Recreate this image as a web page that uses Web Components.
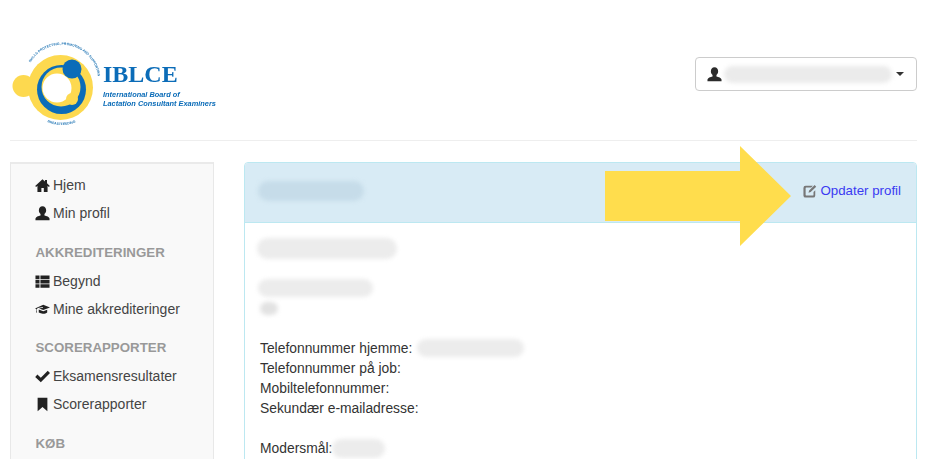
<!DOCTYPE html>
<html lang="da">
<head>
<meta charset="utf-8">
<title>IBLCE</title>
<style>
  html, body { margin: 0; height: 100%; overflow: hidden; background: #fff; }
  body { font: 14px/20px "Liberation Sans", Arial, sans-serif; color: #333; }
</style>
</head>
<body>
<app-page>
  <iblce-logo slot="logo"></iblce-logo>
  <user-menu slot="user"></user-menu>

  <side-nav slot="nav">
    <nav-item icon="home">Hjem</nav-item>
    <nav-item icon="user">Min profil</nav-item>
    <nav-heading>Akkrediteringer</nav-heading>
    <nav-item icon="list">Begynd</nav-item>
    <nav-item icon="cap">Mine akkrediteringer</nav-item>
    <nav-heading style="margin-top:15px">Scorerapporter</nav-heading>
    <nav-item icon="check">Eksamensresultater</nav-item>
    <nav-item icon="bookmark">Scorerapporter</nav-item>
    <nav-heading>Køb</nav-heading>
  </side-nav>

  <profile-panel slot="main">
    <blur-mark slot="title" w="106" h="20" tone="#c6dce9"></blur-mark>
    <profile-line><blur-mark w="140" h="21" style="margin-left:-3px"></blur-mark></profile-line>
    <profile-line></profile-line>
    <profile-line><blur-mark w="115" h="18" style="margin-left:-2px"></blur-mark></profile-line>
    <profile-line><blur-mark w="18" h="13" tone="#e2e2e2"></blur-mark></profile-line>
    <profile-line></profile-line>
    <profile-line>Telefonnummer hjemme:<blur-mark w="107" h="18" style="margin-left:5px"></blur-mark></profile-line>
    <profile-line>Telefonnummer på job:</profile-line>
    <profile-line>Mobiltelefonnummer:</profile-line>
    <profile-line>Sekundær e-mailadresse:</profile-line>
    <profile-line></profile-line>
    <profile-line>Modersmål:<blur-mark w="53" h="19"></blur-mark></profile-line>
  </profile-panel>

  <callout-arrow slot="overlay"></callout-arrow>
</app-page>

<script>
const ICONS = {
  home: '<path d="M8 1.2 .2 8.400l1 1.100L2.600 8.300V15h4.200v-4.400h2.600V15h4V8.300l1.400 1.200 1-1.100L12.800 5.600V2h-2.200v1.600z"/>',
  user: '<path d="M8 .3c-2.500 0-3.900 1.900-3.900 4.300 0 1.700.8 3.200 1.800 4v1.500c-2.300.6-5.100 1.500-5.400 3.100v2.100h15v-2.100c-.3-1.600-3.100-2.500-5.400-3.100V8.600c1-.8 1.800-2.300 1.800-4C11.900 2.200 10.500.3 8 .3z"/>',
  list: '<path d="M.5 1.500h4.300v3.800H.5zM5.800 1.500h9.700v3.800H5.800zM.5 6.200h4.300V10H.5zM5.800 6.200h9.700V10H5.800zM.5 10.900h4.300v3.800H.5zM5.800 10.900h9.700v3.800H5.800z"/>',
  cap: '<path d="M8.800 3 16 5.800 8.800 8.600 4.300 6.900 8.600 6.100 8.400 5.400 3 6.500 1.900 7.700 1.800 9.600 2.300 11.300 1.200 11.300 1.300 9.500 1.400 7.400 0 6.800zM4 8l4.800 1.900L13 8.200v3c-1.100 1-2.800 1.500-4.700 1.400-1.500-.1-3-.5-4.300-1.300z"/>',
  check: '<path d="M13.600 1.800 16 4.300 6.200 14.200 .2 8.400 2.600 5.900l3.600 3.400z"/>',
  bookmark: '<path d="M2.800 .8h10.400v14.400L8 10.600 2.800 15.200z"/>',
  edit: '<path d="M3 2h8.300L9.300 4H3.500a.5.500 0 0 0-.5.500v8a.5.500 0 0 0 .5.500h8a.5.500 0 0 0 .5-.5V9l2-2v6a2.500 2.500 0 0 1-2.500 2.500H3A2.500 2.500 0 0 1 .5 13V4.500A2.500 2.500 0 0 1 3 2zM13.300 1.200l1.800 1.800-6.300 6.200-2.500.7.700-2.500z"/>'
};

function iconSvg(name, size) {
  return `<svg viewBox="0 0 16 16" width="${size}" height="${size}" fill="currentColor" aria-hidden="true">${ICONS[name]}</svg>`;
}

class AppPage extends HTMLElement {
  connectedCallback() {
    this.attachShadow({ mode: 'open' });
    this.shadowRoot.innerHTML = `
      <style>
        :host { display: block; position: relative; height: 100vh; overflow: hidden; padding: 0 14px 0 10px; box-sizing: border-box; }
        header { display: flex; justify-content: space-between; align-items: flex-start; height: 140px; border-bottom: 1px solid #eee; }
        .logo-slot { padding-top: 43px; margin-left: 2px; }
        .user-slot { padding-top: 57px; }
        .columns { display: grid; grid-template-columns: 204px 1fr; column-gap: 30px; margin-top: 21px; }
        .overlay { position: absolute; left: 605px; top: 146px; }
      </style>
      <header>
        <div class="logo-slot"><slot name="logo"></slot></div>
        <div class="user-slot"><slot name="user"></slot></div>
      </header>
      <div class="columns">
        <slot name="nav"></slot>
        <slot name="main"></slot>
      </div>
      <div class="overlay"><slot name="overlay"></slot></div>
    `;
  }
}
customElements.define('app-page', AppPage);

class IblceLogo extends HTMLElement {
  connectedCallback() {
    this.attachShadow({ mode: 'open' });
    const gap = '&#160;'.repeat(16);
    this.shadowRoot.innerHTML = `
      <style>
        :host { display: block; width: 205px; height: 84px; }
        svg { display: block; overflow: visible; filter: blur(.35px); }
        .big { font: bold 24px "Liberation Serif", serif; fill: #0b6cb8; }
        .tag { font: italic bold 7.4px "Liberation Sans", sans-serif; fill: #0b6cb8; }
        .ring { font: bold 3.4px "Liberation Sans", sans-serif; fill: #1f74b4; }
      </style>
      <svg viewBox="0 0 205 84" width="205" height="84">
        <defs>
          <path id="ring" d="M18.500 19.500A36.500 36.500 0 0 1 85.500 46M33 78A37 37 0 0 0 70 76"/>
        </defs>
        <g transform="translate(-12,-43)">
          <circle cx="60.500" cy="87.500" r="32.500" fill="#fdd94f"/>
          <circle cx="23.500" cy="86" r="11" fill="#fdd94f"/>
          <circle cx="61.500" cy="89.500" r="24.500" fill="#0b6cb8"/>
          <circle cx="61" cy="87" r="19.500" fill="#fdd94f"/>
          <circle cx="57" cy="88" r="14.500" fill="#fff"/>
          <circle cx="72" cy="69" r="9.500" fill="#0b6cb8"/>
          <circle cx="72" cy="99" r="6" fill="#fdd94f"/>
        </g>
        <text class="ring"><textPath href="#ring">SKILLS PROTECTING, PROMOTING AND SUPPORTING${gap}BREASTFEEDING</textPath></text>
        <text class="big" x="91" y="39">IBLCE</text>
        <text class="tag" x="91" y="54">International Board of</text>
        <text class="tag" x="91" y="63">Lactation Consultant Examiners</text>
      </svg>
    `;
  }
}
customElements.define('iblce-logo', IblceLogo);

class UserMenu extends HTMLElement {
  connectedCallback() {
    this.attachShadow({ mode: 'open' });
    this.shadowRoot.innerHTML = `
      <style>
        :host { display: flex; align-items: center; box-sizing: border-box; width: 222px; height: 34px; padding: 0 11px; border: 1px solid #ccc; border-radius: 4px; background: #fff; color: #2b2b2b; }
        svg { flex: none; margin-right: 2px; }
        .caret { width: 0; height: 0; margin-left: 4px; border-top: 4px solid #333; border-left: 4px solid transparent; border-right: 4px solid transparent; }
      </style>
      ${iconSvg('user', 15)}
      <blur-mark w="168" h="17" tone="#ebebeb"></blur-mark>
      <span class="caret"></span>
    `;
  }
}
customElements.define('user-menu', UserMenu);

class SideNav extends HTMLElement {
  connectedCallback() {
    this.attachShadow({ mode: 'open' });
    this.shadowRoot.innerHTML = `
      <style>
        :host { display: block; box-sizing: border-box; height: 500px; padding: 7px 0 0 24px; background: #f9f9f9; border: 1px solid #e8e8e8; border-top: 2px solid #eaeaea; }
      </style>
      <slot></slot>
    `;
  }
}
customElements.define('side-nav', SideNav);

class NavItem extends HTMLElement {
  connectedCallback() {
    this.attachShadow({ mode: 'open' });
    this.shadowRoot.innerHTML = `
      <style>
        :host { display: flex; align-items: center; height: 28px; color: #444; white-space: nowrap; }
        svg { flex: none; margin-right: 3px; color: #222; }
      </style>
      ${iconSvg(this.getAttribute('icon'), 15)}
      <slot></slot>
    `;
  }
}
customElements.define('nav-item', NavItem);

class NavHeading extends HTMLElement {
  connectedCallback() {
    this.attachShadow({ mode: 'open' });
    this.shadowRoot.innerHTML = `
      <style>
        :host { display: block; margin: 16px 0 4px; padding-left: .5px; font-size: 13.3px; font-weight: bold; line-height: 20px; color: #999; text-transform: uppercase; white-space: nowrap; }
      </style>
      <slot></slot>
    `;
  }
}
customElements.define('nav-heading', NavHeading);

class ProfilePanel extends HTMLElement {
  connectedCallback() {
    this.attachShadow({ mode: 'open' });
    this.shadowRoot.innerHTML = `
      <style>
        :host { display: block; box-sizing: border-box; height: 500px; border: 1px solid #bce8f1; border-radius: 4px; background: #fff; }
        .head { display: flex; justify-content: space-between; align-items: center; height: 60px; box-sizing: border-box; padding: 0 15px 4px 13px; background: #d8ebf5; border-bottom: 1px solid #bce8f1; border-radius: 3px 3px 0 0; }
        a { display: flex; align-items: center; gap: 3px; font-size: 13.3px; color: #3a3af2; text-decoration: none; white-space: nowrap; }
        a svg { color: #777; }
        .body { padding: 15px 15px; }
      </style>
      <div class="head">
        <slot name="title"></slot>
        <a href="#">${iconSvg('edit', 14)}Opdater profil</a>
      </div>
      <div class="body"><slot></slot></div>
    `;
  }
}
customElements.define('profile-panel', ProfilePanel);

class ProfileLine extends HTMLElement {
  connectedCallback() {
    this.attachShadow({ mode: 'open' });
    this.shadowRoot.innerHTML = `
      <style>
        :host { display: flex; align-items: center; height: 20px; font-size: 13.85px; white-space: nowrap; }
      </style>
      <slot></slot>
    `;
  }
}
customElements.define('profile-line', ProfileLine);

class BlurMark extends HTMLElement {
  connectedCallback() {
    this.attachShadow({ mode: 'open' });
    const w = this.getAttribute('w');
    const h = this.getAttribute('h');
    const tone = this.getAttribute('tone') || '#ececec';
    this.shadowRoot.innerHTML = `
      <style>
        :host { display: block; flex: none; width: ${w}px; height: ${h}px; }
        div { width: 100%; height: 100%; border-radius: ${h / 2}px; background: ${tone}; filter: blur(2px); }
      </style>
      <div></div>
    `;
  }
}
customElements.define('blur-mark', BlurMark);

class CalloutArrow extends HTMLElement {
  connectedCallback() {
    this.attachShadow({ mode: 'open' });
    this.shadowRoot.innerHTML = `
      <style>
        :host { display: block; width: 186px; height: 100px; }
        svg { display: block; }
      </style>
      <svg viewBox="0 0 186 100" width="186" height="100">
        <polygon points="0,25 135,25 135,0 186,50 135,100 135,75 0,75" fill="#ffdd4d"/>
      </svg>
    `;
  }
}
customElements.define('callout-arrow', CalloutArrow);
</script>
</body>
</html>
